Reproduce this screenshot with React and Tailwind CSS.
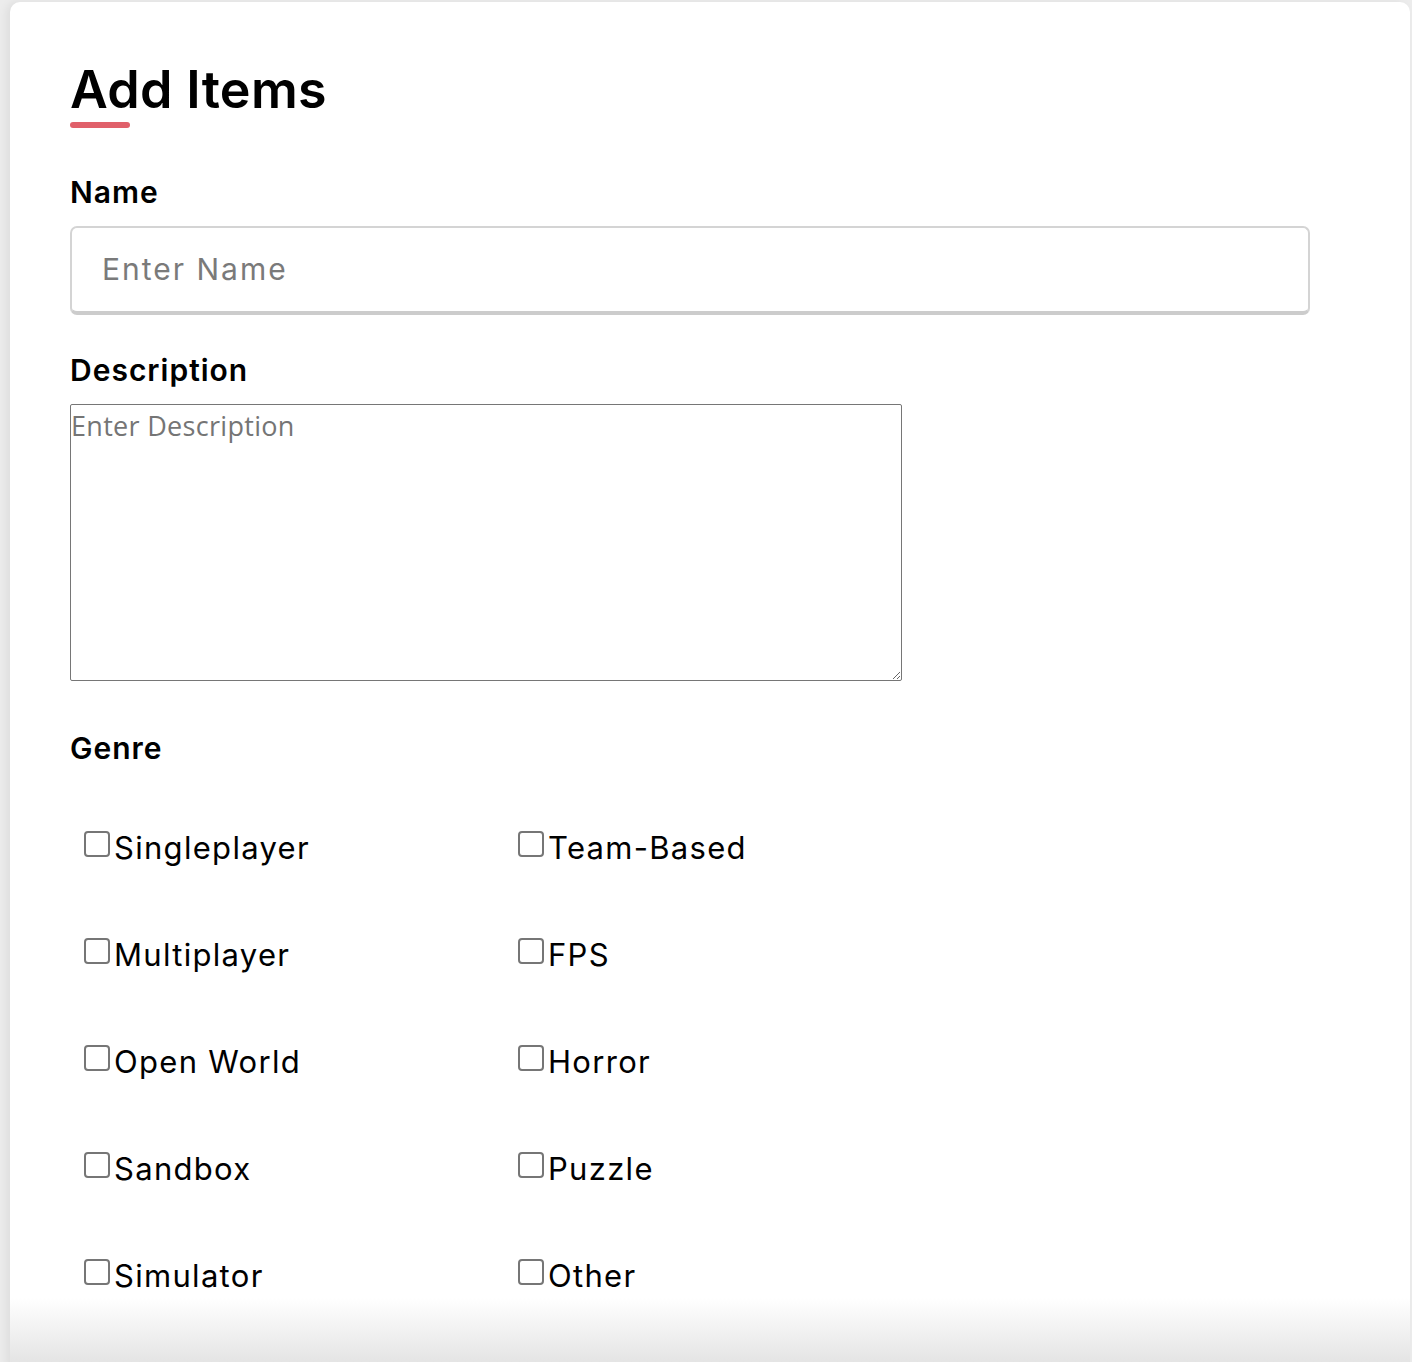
import React from 'react';

const genres = [
  ['Singleplayer', 'Team-Based'],
  ['Multiplayer', 'FPS'],
  ['Open World', 'Horror'],
  ['Sandbox', 'Puzzle'],
  ['Simulator', 'Other'],
];

const Check = ({ label }) => (
  <label className="flex items-start">
    <span className="mt-[5px] mr-[4px] w-[26px] h-[26px] rounded-[4px] border-2 border-[#767676] bg-white shrink-0"></span>
    <span className="text-[31px] leading-[44px] tracking-[1.3px] text-black">{label}</span>
  </label>
);

const App = () => {
  return (
    <div className="bg-[#ececec] min-h-screen pl-[10px] pr-[2px] pt-[2px]" style={{ fontFamily: 'Inter, "Noto Sans", sans-serif' }}>
      <div className="bg-white rounded-t-[10px] shadow-[-4px_0_8px_rgba(0,0,0,0.06)] flex flex-col">
        <div className="px-[60px] pt-[58px]">
          {/* Title */}
          <h1 className="text-[52px] leading-[60px] font-semibold text-black tracking-[0.3px]">Add Items</h1>
          <div className="mt-[2px] w-[60px] h-[6px] rounded-full bg-[#e0606a]"></div>

          {/* Name */}
          <div className="mt-[46px] text-[30px] leading-[36px] font-semibold text-black tracking-[1px]">Name</div>
          <div className="mt-[16px] w-[1240px] h-[89px] rounded-[7px] border-2 border-[#d4d4d4] border-b-[4px] border-b-[#cccccc] flex items-center px-[30px]">
            <span className="text-[30px] tracking-[2px] text-[#7a7a7a]">Enter Name</span>
          </div>

          {/* Description */}
          <div className="mt-[37px] text-[30px] leading-[36px] font-semibold text-black tracking-[1px]">Description</div>
          <textarea
            placeholder="Enter Description"
            className="mt-[16px] block w-[832px] h-[277px] border border-[#767676] rounded-[2px] text-[27px] leading-[42px] tracking-[0.3px] placeholder:text-[#757575] outline-none resize"
            style={{ fontFamily: '"Open Sans", sans-serif' }}
          ></textarea>

          {/* Genre */}
          <div className="mt-[49px] text-[30px] leading-[36px] font-semibold text-black tracking-[1px]">Genre</div>
          <div className="mt-[60px] pl-[14px] grid grid-cols-[434px_434px] gap-y-[63px]">
            {genres.map(([a, b]) => (
              <React.Fragment key={a}>
                <Check label={a} />
                <Check label={b} />
              </React.Fragment>
            ))}
          </div>
        </div>
        <div className="h-[70px] bg-gradient-to-b from-white to-[#e2e2e2]"></div>
      </div>
    </div>
  );
};

export default App;
